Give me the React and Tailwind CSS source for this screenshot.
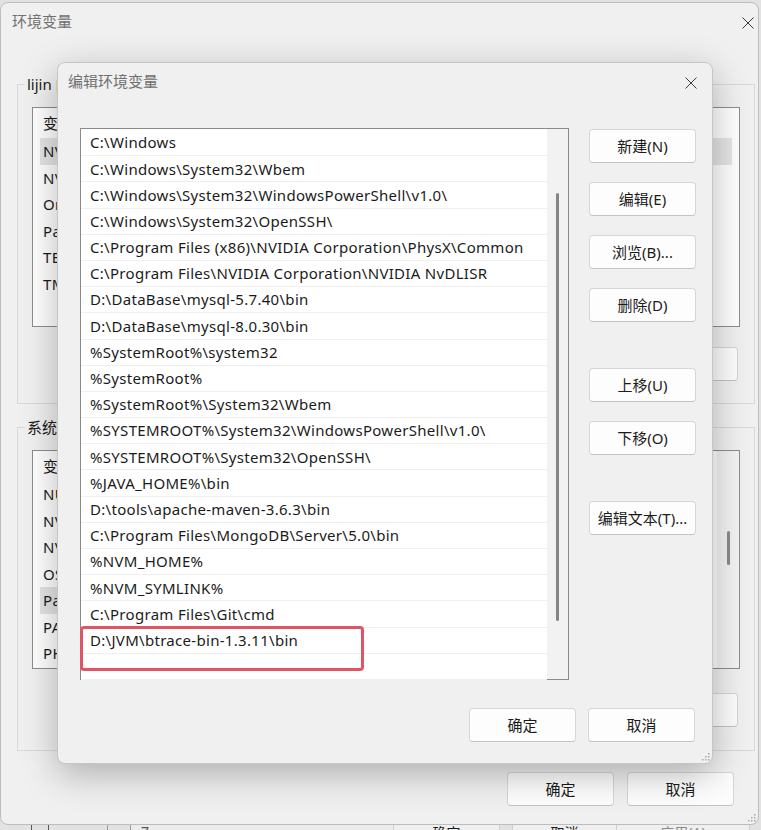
import React from "react";

const paths = [
  "C:\\Windows",
  "C:\\Windows\\System32\\Wbem",
  "C:\\Windows\\System32\\WindowsPowerShell\\v1.0\\",
  "C:\\Windows\\System32\\OpenSSH\\",
  "C:\\Program Files (x86)\\NVIDIA Corporation\\PhysX\\Common",
  "C:\\Program Files\\NVIDIA Corporation\\NVIDIA NvDLISR",
  "D:\\DataBase\\mysql-5.7.40\\bin",
  "D:\\DataBase\\mysql-8.0.30\\bin",
  "%SystemRoot%\\system32",
  "%SystemRoot%",
  "%SystemRoot%\\System32\\Wbem",
  "%SYSTEMROOT%\\System32\\WindowsPowerShell\\v1.0\\",
  "%SYSTEMROOT%\\System32\\OpenSSH\\",
  "%JAVA_HOME%\\bin",
  "D:\\tools\\apache-maven-3.6.3\\bin",
  "C:\\Program Files\\MongoDB\\Server\\5.0\\bin",
  "%NVM_HOME%",
  "%NVM_SYMLINK%",
  "C:\\Program Files\\Git\\cmd",
  "D:\\JVM\\btrace-bin-1.3.11\\bin",
  "",
];

const userVars = [
  ["NVM_HOME", "D:\\tools\\nvm"],
  ["NVM_SYMLINK", "D:\\tools\\nodejs"],
  ["OneDrive", "C:\\Users\\lijin\\OneDrive"],
  ["Path", "C:\\Users\\lijin\\AppData\\Local\\Microsoft\\WindowsApps;"],
  ["TEMP", "C:\\Users\\lijin\\AppData\\Local\\Temp"],
  ["TMP", "C:\\Users\\lijin\\AppData\\Local\\Temp"],
];

const sysVars = [
  ["NUMBER_OF_PROCESSORS", "16"],
  ["NVM_HOME", "D:\\tools\\nvm"],
  ["NVM_SYMLINK", "D:\\tools\\nodejs"],
  ["OS", "Windows_NT"],
  ["Path", "C:\\Windows;C:\\Windows\\System32\\Wbem;"],
  ["PATHEXT", ".COM;.EXE;.BAT;.CMD;.VBS;.VBE;.JS;.JSE;.WSF;.WSH;.MSC"],
  ["PHP_HOME", "D:\\tools\\php"],
];

function CloseIcon() {
  return (
    <svg width="12" height="12" viewBox="0 0 12 12" className="block">
      <path d="M0.5 0.5 L11.5 11.5 M11.5 0.5 L0.5 11.5" stroke="#3a3a3a" strokeWidth="1" fill="none" />
    </svg>
  );
}

function Grip() {
  return (
    <svg width="9" height="9" viewBox="0 0 9 9" className="block">
      {[
        [7, 1], [7, 4], [4, 4], [7, 7], [4, 7], [1, 7],
      ].map(([x, y], i) => (
        <rect key={i} x={x} y={y} width="1.5" height="1.5" fill="#a8a8a8" />
      ))}
    </svg>
  );
}

function Btn({ children, className = "" }) {
  return (
    <div
      className={`w-[107px] h-[34px] shrink-0 flex items-center justify-center rounded-[4px] border border-[#d6d6d6] border-b-[#c3c3c3] bg-[#fdfdfd] text-[15px] text-[#1b1b1b] ${className}`}
    >
      {children}
    </div>
  );
}

function VarList({ rows, selected, height, scroll }) {
  return (
    <div className={`w-[708px] ${height} border border-[#8d8d8d] bg-white flex`}>
      <div className="flex-1 px-[7px] text-[15px] tracking-[0.3px] text-[#1b1b1b]">
        <div className="h-[30px] flex items-center">
          <span className="w-[220px] pl-[3px]">变量</span>
          <span>值</span>
        </div>
        {rows.map(([k, v], i) => (
          <div
            key={k}
            className={`h-[26.5px] flex items-center ${i === selected ? "bg-[#e5e5e5]" : ""}`}
          >
            <span className="w-[220px] pl-[3px] whitespace-nowrap">{k}</span>
            <span className="whitespace-nowrap">{v}</span>
          </div>
        ))}
      </div>
      {scroll && (
        <div className="w-[22px] bg-[#f3f3f3] flex flex-col items-center">
          <div className="mt-[80px] h-[34px] w-[3px] rounded-full bg-[#8a8a8a]" />
        </div>
      )}
    </div>
  );
}

function EditDialog() {
  return (
    <div className="absolute left-[57px] top-[62px] w-[656px] h-[702px] rounded-[8px] border border-[#c6c6c6] bg-[#f0f0f0] shadow-[0_10px_36px_rgba(0,0,0,0.28)] flex flex-col">
      <div className="h-[65px] shrink-0 flex items-start justify-between pl-[10px] pr-[15px] pt-[8px]">
        <span className="text-[15px] leading-[20px] text-[#6f6f6f]">编辑环境变量</span>
        <div className="pt-[6px]">
          <CloseIcon />
        </div>
      </div>

      <div className="flex pl-[22px] gap-[20px]">
        <div className="relative w-[489px] h-[552px] border border-[#8a8a8a] bg-white flex">
          <div className="flex-1 pt-[1px] text-[15px] tracking-[0.3px] text-[#1b1b1b]">
            {paths.map((p, i) => (
              <div
                key={i}
                className="h-[26.2px] flex items-center pl-[9px] border-b border-[#f0f0f0] whitespace-nowrap"
              >
                {p}
              </div>
            ))}
          </div>
          <div className="w-[21px] bg-[#f2f2f2] flex flex-col items-center">
            <div className="mt-[64px] h-[428px] w-[3px] rounded-full bg-[#858585]" />
          </div>
          <div className="absolute left-[-1px] top-[497px] w-[284px] h-[45px] rounded-[4px] border-[3px] border-[#e05563]" />
        </div>

        <div className="flex flex-col gap-[19px] pt-[1px]">
          <Btn>新建(N)</Btn>
          <Btn>编辑(E)</Btn>
          <Btn>浏览(B)...</Btn>
          <Btn>删除(D)</Btn>
          <Btn className="mt-[27px]">上移(U)</Btn>
          <Btn>下移(O)</Btn>
          <Btn className="mt-[27px]">编辑文本(T)...</Btn>
        </div>
      </div>

      <div className="flex justify-end gap-[12px] pr-[17px] mt-[28px]">
        <Btn>确定</Btn>
        <Btn>取消</Btn>
      </div>
      <div className="flex-1 flex items-end justify-end pr-[2px] pb-[2px]">
        <Grip />
      </div>
    </div>
  );
}

export default function App() {
  return (
    <div className="relative w-[761px] h-[830px] overflow-hidden bg-[#e2e2e2] font-['Noto_Sans','Noto_Sans_CJK_SC',sans-serif] flex flex-col">
      <div className="h-[2px] shrink-0" />

      {/* 环境变量 window */}
      <div className="h-[823px] shrink-0 w-[759px] rounded-[8px] border border-[#bdbdbd] bg-[#f0f0f0] flex flex-col">
        <div className="h-[72px] shrink-0 flex items-start justify-between pl-[11px] pr-[4px] pt-[8px]">
          <span className="text-[15px] leading-[20px] text-[#707070]">环境变量</span>
          <div className="pt-[6px]">
            <CloseIcon />
          </div>
        </div>

        <div className="pl-[16px]">
          <fieldset className="w-[737px] border border-[#d8d8d8] px-[14px] pb-[22px]">
            <legend className="ml-[-7px] px-[2px] text-[15px] leading-[18px] text-[#1b1b1b]">
              lijin 的用户变量(U)
            </legend>
            <div className="mt-[14px]">
              <VarList rows={userVars} selected={0} height="h-[220px]" />
            </div>
            <div className="mt-[20px] flex justify-end gap-[12px] pr-[2px]">
              <Btn className="h-[33px]">新建(N)...</Btn>
              <Btn className="h-[33px]">编辑(E)...</Btn>
              <Btn className="h-[33px]">删除(D)</Btn>
            </div>
          </fieldset>

          <fieldset className="mt-[14px] w-[737px] border border-[#d8d8d8] px-[14px] pb-[23px]">
            <legend className="ml-[-7px] px-[2px] text-[15px] leading-[18px] text-[#1b1b1b]">
              系统变量(S)
            </legend>
            <div className="mt-[14px]">
              <VarList rows={sysVars} selected={4} height="h-[219px]" scroll />
            </div>
            <div className="mt-[24px] flex justify-end gap-[12px] pr-[2px]">
              <Btn className="h-[33px]">新建(W)...</Btn>
              <Btn className="h-[33px]">编辑(I)...</Btn>
              <Btn className="h-[33px]">删除(L)</Btn>
            </div>
          </fieldset>
        </div>

        <div className="mt-[21px] flex justify-end gap-[13px] pr-[24px]">
          <Btn className="h-[33px]">确定</Btn>
          <Btn className="h-[33px]">取消</Btn>
        </div>
        <div className="flex-1 flex items-end justify-end pr-[2px] pb-[2px]">
          <Grip />
        </div>
      </div>

      {/* window behind, bottom edge */}
      <div className="flex-1 flex text-[14px] leading-[14px] text-[#1b1b1b] overflow-hidden">
        <div className="w-[32px] border-r border-[#555]" />
        <div className="w-[17px] border-r border-[#555]" />
        <div className="w-[59px] border-r border-[#9a9a9a]" />
        <div className="w-[23px] border-r border-[#9a9a9a]" />
        <div className="w-[262px] bg-[#ececec] pl-[10px] text-[#555]">7</div>
        <div className="w-[107px] border-x border-[#cfcfcf] bg-[#efefef] text-center pt-[1px]">确定</div>
        <div className="w-[12px]" />
        <div className="w-[105px] border-x border-[#cfcfcf] bg-[#efefef] text-center pt-[1px]">取消</div>
        <div className="w-[133px] border-r border-[#cfcfcf] bg-[#efefef] text-center pt-[1px] text-[#8a8a8a]">应用(A)</div>
      </div>

      <EditDialog />
    </div>
  );
}
